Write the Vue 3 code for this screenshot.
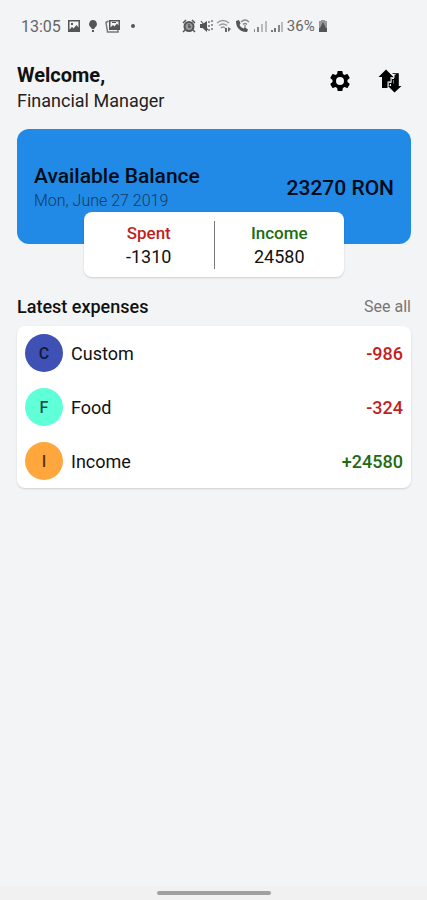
<script setup>
import { ref, computed } from 'vue'

const currency = 'RON'
const spent = ref(-1310)
const income = ref(24580)

// balance = income + spent
const balance = computed(() => income.value + spent.value)

const expenses = ref([
  { id: 1, name: 'Custom', amount: -986, color: 'indigo' },
  { id: 2, name: 'Food', amount: -324, color: 'mint' },
  { id: 3, name: 'Income', amount: 24580, color: 'orange' }
])

const formatAmount = (amount) => (amount > 0 ? '+' + amount : String(amount))
</script>

<template>
  <div class="screen">
    <!-- status bar -->
    <div class="status-bar">
      <div class="status-left">
        <span class="clock">13:05</span>
        <svg width="14" height="14" viewBox="0 0 14 14">
          <path fill="#555" fill-rule="evenodd" d="M1 1h12v12H1zM2.5 2.5v8.2L5 7.8l1.5 1.6L9.5 6l2 2.4V2.5zM4 4h2v2H4z" />
        </svg>
        <svg width="12" height="14" viewBox="0 0 12 14">
          <path fill="#555" d="M6 1a4 4 0 0 1 2 7.4L7 10H5L4 8.400A4 4 0 0 1 6 1zM5 11h2v2H5z" />
        </svg>
        <svg width="16" height="14" viewBox="0 0 16 14">
          <path fill="none" stroke="#777" stroke-width="1.5" d="M3.5 2L1 3.5l1.5 9.5h10.5v-2" />
          <path fill="#555" fill-rule="evenodd" d="M4 1h11v10H4zM5.5 2.5v6L8 6l1.5 1.5L12 4.5l1.5 2v-4zM7 3h4v1H7z" />
        </svg>
        <span class="dot"></span>
      </div>
      <div class="status-right">
        <svg width="14" height="14" viewBox="0 0 14 14">
          <circle cx="7" cy="7.5" r="4.5" fill="#999" stroke="#555" stroke-width="2" />
          <path fill="none" stroke="#555" stroke-width="1.5" d="M1 4l3-3M13 4l-3-3M3 11l-2 2M11 11l2 2M7 5v3h2" />
        </svg>
        <svg width="14" height="14" viewBox="0 0 14 14">
          <path fill="#555" d="M1 5h2.5L8 2v11L3.5 9H1z" />
          <path fill="none" stroke="#555" stroke-width="1.2" d="M2 2l7 9" />
          <path fill="none" stroke="#777" stroke-width="1.5" d="M10 2v2M10 6v2M10 10v2M13 1v2M13 5v2M13 9v2" />
        </svg>
        <svg width="16" height="14" viewBox="0 0 16 14">
          <path fill="none" stroke="#999" stroke-width="1.5" d="M1 4q6-5 12 0M3 6.5q4-3 8 0M5 9q2-2 4 0" />
          <path fill="#666" d="M9 9h2v4H9zM12 8l3 2-3 3z" />
        </svg>
        <svg width="15" height="14" viewBox="0 0 15 14">
          <path fill="#555" d="M1 2l3-1 1.5 3.5L4.5 6q1 2.5 4 3.5l1.5-1 3 2-1 2.500Q5 13 2 7.500 1 5 1 2z" />
          <path fill="none" stroke="#888" stroke-width="1.3" d="M6 3q4-4 8 0M8 5.5q2-2 4 0M10 6v3" />
        </svg>
        <svg width="14" height="14" viewBox="0 0 14 14">
          <path fill="#888" d="M1 10h1v3H1zM4 8h2v5H4z" />
          <path fill="#bbb" d="M8 5h2v8H8zM12 2h2v11h-2z" />
        </svg>
        <svg width="14" height="14" viewBox="0 0 14 14">
          <path fill="#777" d="M1 11h2v2H1zM4 9h2v4H4z" />
          <path fill="#888" d="M8 6h2v7H8z" />
          <path fill="#bbb" d="M11 3h2v10h-2z" />
        </svg>
        <span class="battery">36%</span>
        <svg width="10" height="14" viewBox="0 0 10 14">
          <path fill="#999" d="M3 1h4v1h2v7H1V2h2z" />
          <path fill="#555" d="M1 9h8v4H1zM5 3l3 6H2z" />
        </svg>
      </div>
    </div>

    <main class="content">
      <!-- greeting -->
      <header class="header">
        <div>
          <h1 class="welcome">Welcome,</h1>
          <p class="app-name">Financial Manager</p>
        </div>
        <div class="actions">
          <button class="icon-btn" type="button" aria-label="Settings">
            <svg width="24" height="24" viewBox="0 0 24 24">
              <path d="M19.430 12.980c.04-.32.07-.64.07-.98s-.03-.66-.07-.98l2.110-1.650c.19-.15.24-.42.12-.64l-2-3.460c-.12-.22-.39-.3-.61-.22l-2.490 1c-.52-.4-1.080-.73-1.690-.98l-.38-2.650A.488.488 0 0 0 14 2h-4c-.25 0-.46.18-.49.42l-.38 2.650c-.61.25-1.170.59-1.690.98l-2.490-1c-.23-.09-.49 0-.61.22l-2 3.460c-.13.22-.07.49.12.64l2.110 1.650c-.04.32-.07.65-.07.98s.03.66.07.98l-2.110 1.650c-.19.15-.24.42-.12.64l2 3.460c.12.22.39.3.61.22l2.490-1c.52.4 1.080.73 1.690.98l.38 2.650c.03.24.24.42.49.42h4c.25 0 .46-.18.49-.42l.38-2.650c.61-.25 1.170-.59 1.690-.98l2.490 1c.23.09.49 0 .61-.22l2-3.460c.12-.22.07-.49-.12-.64zM12 16a4 4 0 1 1 0-8 4 4 0 0 1 0 8z" />
            </svg>
          </button>
          <button class="icon-btn" type="button" aria-label="Transactions">
            <svg width="24" height="24" viewBox="0 0 24 24">
              <path d="M8 0.5L15.500 8H12.500V12.500H9.500V19H4V8H0.500z" />
              <path d="M16.500 23.500L10 17H13V14.500H16V10H17.500V5H20V17H23.500z" />
              <path d="M10.500 14H13.500V10H16V6H18V11H15.500V15H12V18z" />
              <path fill="none" stroke="#333" d="M14.500 4.500h6V17" />
              <path fill="none" stroke="#aaa" stroke-width="0.8" d="M16.500 5.500V8.500H13.500V13H10.500V17" />
            </svg>
          </button>
        </div>
      </header>

      <!-- balance -->
      <section class="balance-card">
        <div>
          <h2 class="balance-title">Available Balance</h2>
          <p class="balance-date">Mon, June 27 2019</p>
        </div>
        <span class="balance-value">{{ balance }} {{ currency }}</span>
      </section>

      <section class="summary-card">
        <div class="summary-item">
          <span class="summary-label negative">Spent</span>
          <span class="summary-value">{{ spent }}</span>
        </div>
        <div class="summary-item">
          <span class="summary-label positive">Income</span>
          <span class="summary-value">{{ income }}</span>
        </div>
      </section>

      <!-- latest expenses -->
      <div class="list-header">
        <h2 class="list-title">Latest expenses</h2>
        <a href="#" class="see-all">See all</a>
      </div>
      <ul class="expense-list">
        <li v-for="expense in expenses" :key="expense.id" class="expense-item">
          <span class="avatar" :class="expense.color">{{ expense.name.charAt(0) }}</span>
          <span class="expense-name">{{ expense.name }}</span>
          <span class="expense-amount" :class="expense.amount < 0 ? 'negative' : 'positive'">
            {{ formatAmount(expense.amount) }}
          </span>
        </li>
      </ul>
    </main>

    <div class="nav-bar">
      <span class="nav-handle"></span>
    </div>
  </div>
</template>

<style>
body {
  margin: 0;
  background-color: #f3f4f6;
}
</style>

<style scoped>
.screen {
  display: flex;
  flex-direction: column;
  min-height: 100vh;
  background-color: #f3f4f6;
  color: #111;
  font-family: Roboto, "Liberation Sans", sans-serif;
}

h1,
h2,
p,
ul {
  margin: 0;
  padding: 0;
}

.status-bar {
  display: flex;
  align-items: center;
  gap: 47px;
  height: 24px;
  padding: 14px 20px 0;
  font-size: 16px;
  color: #666;
}

.status-left,
.status-right {
  display: flex;
  align-items: center;
}

.status-left {
  gap: 6px;
}

.status-right {
  gap: 3px;
}

.clock {
  margin-left: 1px;
}

.battery {
  font-size: 15px;
}

.dot {
  width: 4px;
  height: 4px;
  margin-left: 4px;
  border-radius: 50%;
  background-color: #555;
}

.content {
  flex: 1;
  padding: 24px 16px 0 17px;
}

.header {
  display: flex;
  justify-content: space-between;
  align-items: flex-start;
  margin-bottom: 15px;
}

.welcome {
  font-size: 20px;
  font-weight: 700;
  line-height: 26px;
}

.app-name {
  font-size: 18px;
  line-height: 26px;
  color: #222;
}

.actions {
  display: flex;
  gap: 26px;
  padding: 7px 9px 0 0;
}

.icon-btn {
  display: flex;
  padding: 0;
  border: none;
  background: none;
  cursor: pointer;
}

.balance-card {
  display: flex;
  justify-content: space-between;
  align-items: center;
  height: 112px;
  padding: 3px 17px 0;
  border-radius: 12px;
  background-color: #218ae6;
  color: #000b18;
}

.balance-title {
  font-size: 21px;
  font-weight: 500;
  line-height: 26px;
}

.balance-date {
  font-size: 16px;
  font-weight: 300;
  line-height: 24px;
  color: #123a63;
}

.balance-value {
  font-size: 21px;
  font-weight: 500;
}

.summary-card {
  position: relative;
  display: flex;
  width: 66%;
  margin: -32px auto 0;
  padding: 9px 0 8px;
  border-radius: 8px;
  background-color: #fff;
  box-shadow: 0 1px 2px rgba(0, 0, 0, 0.15);
}

.summary-item {
  display: flex;
  flex: 1;
  flex-direction: column;
  align-items: center;
}

.summary-item + .summary-item {
  border-left: 1px solid #777;
}

.summary-label {
  font-size: 17px;
  font-weight: 500;
  line-height: 24px;
}

.summary-value {
  font-size: 18px;
  line-height: 24px;
}

.negative {
  color: #c21f1f;
}

.positive {
  color: #226b12;
}

.list-header {
  display: flex;
  justify-content: space-between;
  align-items: center;
  margin: 17px 0 6px;
  line-height: 26px;
}

.list-title {
  font-size: 18px;
  font-weight: 500;
}

.see-all {
  font-size: 16px;
  color: #777;
  text-decoration: none;
}

.expense-list {
  border-radius: 8px;
  background-color: #fff;
  box-shadow: 0 1px 2px rgba(0, 0, 0, 0.15);
  list-style: none;
}

.expense-item {
  display: flex;
  align-items: center;
  gap: 8px;
  height: 54px;
  padding: 0 8px;
  font-size: 18px;
}

.avatar {
  display: flex;
  align-items: center;
  justify-content: center;
  width: 38px;
  height: 38px;
  border-radius: 50%;
  font-size: 16px;
  font-weight: 500;
  color: rgba(0, 0, 0, 0.7);
}

.indigo {
  background-color: #3f51b5;
}

.mint {
  background-color: #5fffd7;
}

.orange {
  background-color: #ffa63c;
}

.expense-name {
  flex: 1;
}

.expense-amount {
  font-weight: 500;
}

.nav-bar {
  display: flex;
  align-items: center;
  justify-content: center;
  height: 14px;
  background-color: #f1f1f1;
}

.nav-handle {
  width: 114px;
  height: 4px;
  border-radius: 2px;
  background-color: #a0a0a0;
}
</style>
